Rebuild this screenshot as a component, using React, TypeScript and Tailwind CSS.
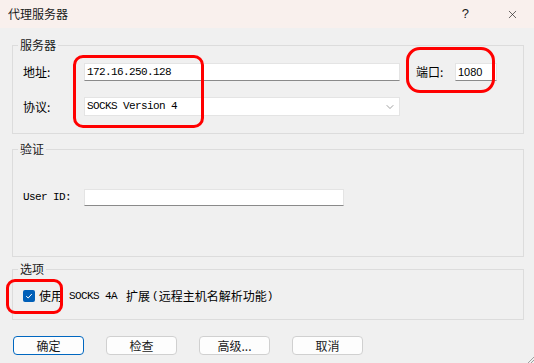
import { ChevronDown, X } from 'lucide-react';

const cjk = '"Noto Sans CJK SC", "Liberation Sans", sans-serif';
const mono = '"Liberation Mono", "Noto Sans CJK SC", monospace';

function GroupBox({ title, children, className }: { title: string; children: React.ReactNode; className?: string }) {
  return (
    <fieldset className={`mx-0 ml-3 mr-[10px] border border-[#dcdcdc] ${className ?? ''}`}>
      <legend className="ml-[5px] px-[2px] text-[12px] leading-[16px] text-[#1a1a1a]">{title}</legend>
      {children}
    </fieldset>
  );
}

function Button({ label, primary }: { label: string; primary?: boolean }) {
  return (
    <button
      className={`w-[71px] h-[19px] rounded-[4px] bg-[#fdfdfd] text-[12px] leading-none text-[#1a1a1a] border ${
        primary ? 'border-[#0067c0]' : 'border-[#d0d0d0]'
      }`}
    >
      {label}
    </button>
  );
}

export default function App() {
  return (
    <div className="relative w-[534px] h-[363px] overflow-hidden bg-[#f0f0f0]" style={{ fontFamily: cjk }}>
      {/* title bar */}
      <div className="h-[28px] flex items-center pl-2 bg-[#f9f0ed]">
        <span className="text-[12px] text-[#1a1a1a]">代理服务器</span>
        <span className="ml-auto text-[13px] text-[#1a1a1a]" style={{ fontFamily: '"Liberation Sans", sans-serif' }}>?</span>
        <X size={13} strokeWidth={1.2} className="ml-[37px] mr-[15px] text-[#1a1a1a]" />
      </div>

      <GroupBox title="服务器" className="mt-[9px]">
        <div className="pl-[10px] pb-[17px]">
          <div className="mt-[10px] h-[18px] flex items-center">
            <span className="w-[61px] text-[12px]">地址:</span>
            <div className="w-[316px] h-[18px] bg-white border border-[#e4e4e4] border-b-[#8a8a8a] flex items-center pl-[2px]">
              <span className="text-[11px] tracking-[-0.6px] text-black" style={{ fontFamily: mono }}>172.16.250.128</span>
            </div>
            <span className="ml-[16px] w-[39px] text-[12px]">端口:</span>
            <div className="w-[42px] h-[18px] bg-white border border-[#e4e4e4] border-b-[#8a8a8a] flex items-center pl-[2px]">
              <span className="text-[11px] text-black" style={{ fontFamily: '"Liberation Sans", sans-serif' }}>1080</span>
            </div>
          </div>
          <div className="mt-[16px] h-[19px] flex items-center">
            <span className="w-[61px] text-[12px]">协议:</span>
            <div className="w-[316px] h-[19px] bg-white border border-[#e4e4e4] flex items-center pl-[2px] pr-[3px]">
              <span className="text-[11px] tracking-[-0.6px] text-black" style={{ fontFamily: mono }}>SOCKS Version 4</span>
              <ChevronDown size={12} strokeWidth={1.2} className="ml-auto text-[#606060]" />
            </div>
          </div>
        </div>
      </GroupBox>

      <GroupBox title="验证" className="mt-[7px]">
        <div className="pl-[10px] pt-[32px] pb-[50px]">
          <div className="h-[17px] flex items-center">
            <span className="w-[61px] text-[11px] tracking-[-0.6px]" style={{ fontFamily: mono }}>User ID:</span>
            <div className="w-[260px] h-[17px] bg-white border border-[#e4e4e4] border-b-[#8a8a8a]" />
          </div>
        </div>
      </GroupBox>

      <GroupBox title="选项" className="mt-[4px]">
        <div className="pl-[10px] pt-[10px] pb-[14px]">
          <div className="h-[18px] flex items-center">
            <span className="w-[12px] h-[12px] rounded-[2px] bg-[#005fb8] flex items-center justify-center">
              <svg width="8" height="8" viewBox="0 0 8 8">
                <path d="M1.2 4.2 L3.2 6 L6.8 2" fill="none" stroke="white" strokeWidth="1" />
              </svg>
            </span>
            <span className="ml-[4px] text-[12px]">使用</span>
            <span className="ml-[6px] text-[11px] tracking-[-0.6px]" style={{ fontFamily: mono }}>SOCKS 4A</span>
            <span className="ml-[9px] text-[12px]">扩展</span>
            <span className="ml-[2px] text-[11px]" style={{ fontFamily: mono }}>(</span>
            <span className="text-[12px]">远程主机名解析功能</span>
            <span className="text-[11px]" style={{ fontFamily: mono }}>)</span>
          </div>
        </div>
      </GroupBox>

      <div className="mt-[16px] ml-[13px] flex gap-[22px]">
        <Button label="确定" primary />
        <Button label="检查" />
        <Button label="高级..." />
        <Button label="取消" />
      </div>

      {/* resize grip */}
      <svg className="absolute right-0 bottom-0" width="8" height="8" viewBox="0 0 8 8">
        <path d="M8 2 L2 8 M8 5 L5 8" stroke="#a0a0a0" strokeWidth="1" />
      </svg>

      {/* red annotations */}
      <div className="absolute left-[73px] top-[55px] w-[131px] h-[73px] rounded-[10px] border-[3px] border-[#ff0000]" />
      <div className="absolute left-[406px] top-[47px] w-[89px] h-[46px] rounded-[14px] border-[3px] border-[#ff0000]" />
      <div className="absolute left-[6px] top-[279px] w-[57px] h-[35px] rounded-[9px] border-[3px] border-[#ff0000]" />
    </div>
  );
}
